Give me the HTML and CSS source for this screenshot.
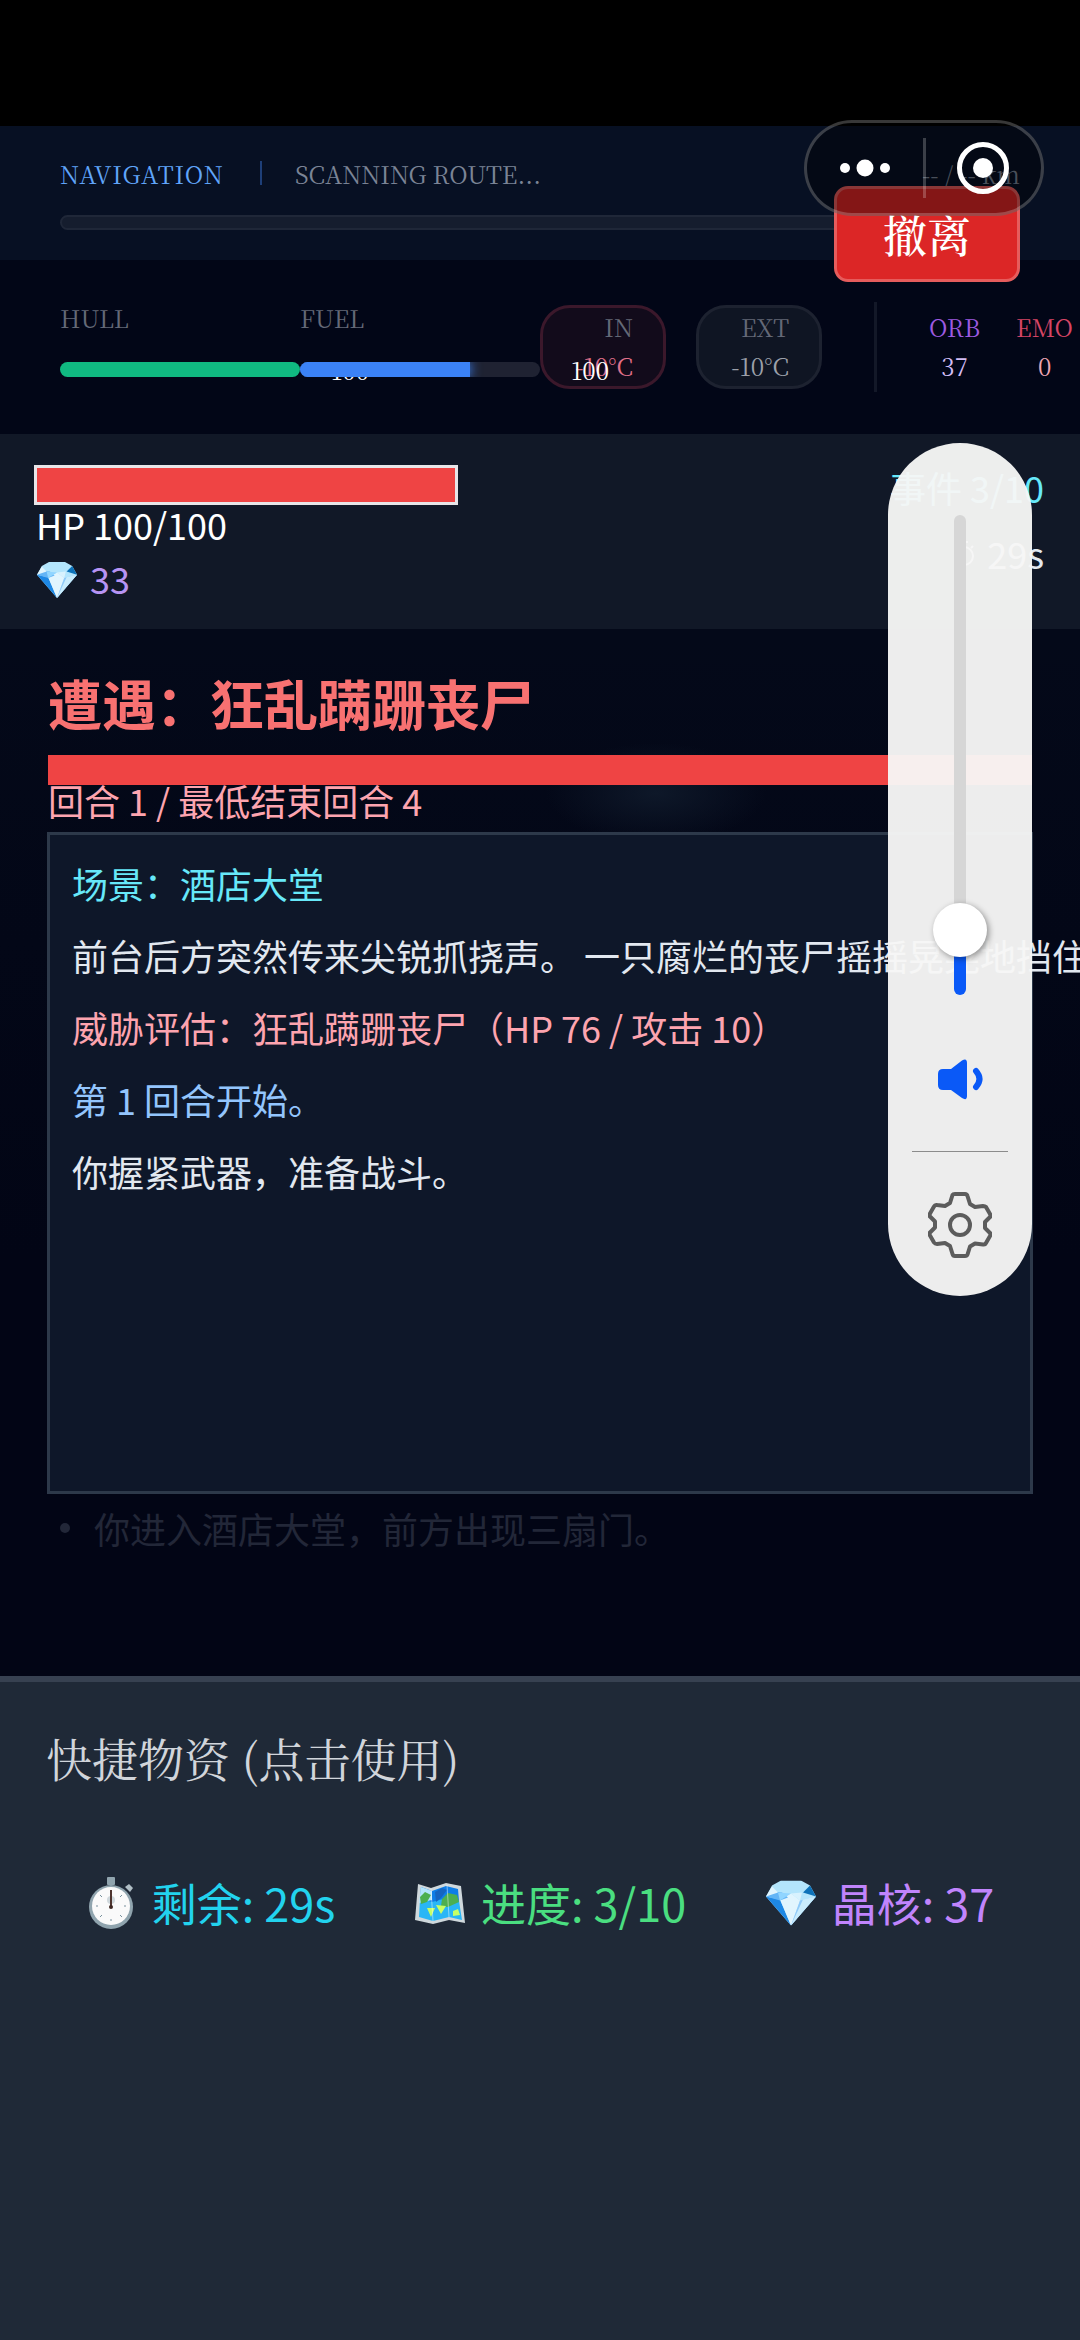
FILE: index.html
```html
<!DOCTYPE html>
<html lang="zh-CN">
<head>
<meta charset="utf-8">
<meta name="viewport" content="width=device-width, initial-scale=1">
<title>遭遇：狂乱蹒跚丧尸</title>
<link rel="stylesheet" href="styles.css">
</head>
<body>
<svg class="defs" aria-hidden="true">
  <symbol id="gem" viewBox="0 0 50 45">
    <path fill="#b3e5fc" d="M15 0h20l9 5 6 11-25 29L0 16 6 5z"/>
    <path fill="#1e88e5" d="M0 16l14 3 11 26z"/>
    <path fill="#e1f5fe" d="M14 19l11-6 9 7-9 25z"/>
    <path fill="#90caf9" d="M34 20l16-4-25 29z"/>
    <path fill="#c9ecfd" d="M37 19l13-3-25 29z"/>
    <path fill="#64b5f6" d="M6 11l10 1 6 5-8 3-14-4z"/>
    <path fill="#90d5ff" d="M12 12l13 1-11 7z"/>
    <path fill="#e1f5fe" d="M0 16l6-10 6 6z"/>
    <path fill="#0d72b9" d="M44 5l6 11-13-4z"/>
    <path fill="#d8f2fe" d="M25 13l11-1-2 8z"/>
  </symbol>
</svg>
<div class="screen">
  <header class="nav">
    <div class="nav-line">
      <span class="nav-title">NAVIGATION</span>
      <span class="nav-sep"></span>
      <span class="nav-route">SCANNING ROUTE...</span>
      <span class="nav-km">-- / -- km</span>
    </div>
    <div class="nav-track"></div>
    <button class="evac" type="button">撤离</button>
  </header>

  <section class="status">
    <div class="meter">
      <span class="label">HULL</span>
      <div class="bar"><div class="fill hull"></div></div>
      <span class="value">100</span>
    </div>
    <div class="meter">
      <span class="label">FUEL</span>
      <div class="bar"><div class="fill fuel" style="width:71%"></div></div>
      <span class="value">100</span>
    </div>
    <div class="temp inside"><span class="label">IN</span><span>-10°C</span></div>
    <div class="temp"><span class="label">EXT</span><span>-10°C</span></div>
    <div class="stats">
      <div class="stat orb"><span class="name">ORB</span><span>37</span></div>
      <div class="stat emo"><span class="name">EMO</span><span>0</span></div>
    </div>
  </section>

  <section class="player">
    <div class="vitals">
      <div class="hp-bar"></div>
      <span>HP 100/100</span>
      <span class="gems"><svg class="gem-small"><use href="#gem"/></svg>33</span>
    </div>
    <div class="progress">
      <span class="event">事件 3/10</span>
      <span class="timer"><svg class="watch" viewBox="0 0 22 28" fill="none" stroke="currentColor" stroke-width="2"><circle cx="11" cy="17" r="9"/><path d="M11 17V10M11 8V4M7 3h8M18 9l2-2"/></svg>29s</span>
    </div>
  </section>

  <main class="battle">
    <h1>遭遇：狂乱蹒跚丧尸</h1>
    <div class="enemy-bar"></div>
    <p class="round">回合 1 / 最低结束回合 4</p>
    <div class="log">
      <p class="scene">场景：酒店大堂</p>
      <p>前台后方突然传来尖锐抓挠声。 一只腐烂的丧尸摇摇晃晃地挡住</p>
      <p class="threat">威胁评估：狂乱蹒跚丧尸（HP 76 / 攻击 10）</p>
      <p class="turn">第 1 回合开始。</p>
      <p>你握紧武器，准备战斗。</p>
    </div>
    <ul class="history"><li>你进入酒店大堂，前方出现三扇门。</li></ul>
  </main>

  <footer class="supplies">
    <h2>快捷物资 (点击使用)</h2>
    <div class="summary">
      <span class="item time">
        <svg viewBox="0 0 50 52"><rect x="21" y="0" width="8" height="8" rx="1" fill="#90a4ae"/><path d="M39 10l4-3 4 4-3 4z" fill="#b0bec5"/><circle cx="25" cy="30" r="22" fill="#90a4ae"/><circle cx="25" cy="29" r="19" fill="#fafafa"/><path d="M25 14v2M25 42v2M10 29h2M38 29h2M14 18l2 2M34 38l2 2M36 18l-2 2M16 38l-2 2" stroke="#78909c" stroke-width="1"/><circle cx="25" cy="23" r="4" fill="#cfd8dc"/><path d="M25 13v17" stroke="#4e342e" stroke-width="2"/><circle cx="25" cy="30" r="2" fill="#3e2723"/></svg>
        剩余: 29s</span>
      <span class="item route">
        <svg viewBox="0 0 50 52"><path fill="#cfd8dc" d="M3 7l13 4 15-5 15 3 4 37-16-3-16 4-18-4z"/><path fill="#0d7ee8" d="M6 10l11 4 14-5 12 3 1 12-12-2-15 4L5 22z"/><path fill="#29b6f6" d="M5 22l12 3 15-4 12 3 3 19-13-3-16 4-14-4z"/><path fill="#b3e5fc" d="M6 10l11 4v9L4 26z"/><path fill="#4caf50" d="M5 20l5-5 6 3-4 7-6 2zM27 22l6-6 9 2 2 7-11 5-7-1z"/><path fill="#1565c0" d="M20 15l7-4 5 2-6 8-5 4z"/><path fill="#c6ff66" d="M12 31h8l-4 9zM21 28l10 1-5 8zM38 34l5-2 2 6-7 1z"/><path stroke="#fff" stroke-opacity=".45" d="M16 12l2 32M32 8l2 32" fill="none"/></svg>
        进度: 3/10</span>
      <span class="item core">
        <svg viewBox="0 0 50 45"><use href="#gem"/></svg>
        晶核: 37</span>
    </div>
  </footer>

  <div class="capsule">
    <button type="button" aria-label="更多"><svg width="50" height="20" viewBox="0 0 50 20" fill="#fff"><circle cx="5" cy="10" r="5"/><circle cx="25" cy="10" r="8.500"/><circle cx="45" cy="10" r="5"/></svg></button>
    <i class="capsule-sep"></i>
    <button type="button" aria-label="关闭"><svg width="52" height="52" viewBox="0 0 52 52"><circle cx="26" cy="26" r="23.500" fill="none" stroke="#fff" stroke-width="5"/><circle cx="26" cy="26" r="10" fill="#fff"/></svg></button>
  </div>

  <aside class="volume">
    <input type="range" min="0" max="100" value="9" aria-label="音量">
    <svg class="speaker" width="48" height="48" viewBox="0 0 48 48"><path d="M7 14h8L26 5.500Q31 2.500 31 8v33q0 5-5 2L15 35H7q-5 0-5-5V19q0-5 5-5z" fill="#0a59f7"/><path d="M40 16q7 8 0 16" fill="none" stroke="#0a59f7" stroke-width="6" stroke-linecap="round"/></svg>
    <hr>
    <button type="button" aria-label="设置"><svg width="64" height="66" viewBox="0 0 64 66" fill="none" stroke="#5c5c5c" stroke-width="4" stroke-linejoin="round"><path d="M27 2h10q2 0 2.500 2l2.500 8 5 3 8-1q2 0 3 1l4 7q1 2 0 3l-5 5v6l5 5q1 1 0 3l-4 7q-1 2-3 1.500l-8-1-5 3-2.500 8Q39 64 37 64H27q-2 0-2.500-2L22 54l-5-3-8 1q-2 0-3-1.500l-4-7q-1-2 0-3l5-5v-6l-5-5q-1-1 0-3l4-7q1-2 3-1.500l8 1 5-3 2.500-8Q25 2 27 2z"/><circle cx="32" cy="33" r="10"/></svg></button>
  </aside>
</div>
</body>
</html>
```
FILE: styles.css
```css
* { box-sizing: border-box; }

body {
  margin: 0;
  background: #000;
  color: #e2e8f0;
  font-family: "Noto Sans CJK SC", sans-serif;
  font-size: 36px;
  line-height: 48px;
}

h1, h2, p, ul { margin: 0; padding: 0; }
button { border: 0; padding: 0; background: none; display: flex; align-items: center; justify-content: center; }
svg { display: block; }
.defs { position: absolute; width: 0; height: 0; }

.screen {
  position: relative;
  display: flex;
  flex-direction: column;
  min-height: 100vh;
  padding-top: 126px;
  overflow: hidden;
}

/* Navigation strip */
.nav, .status {
  font-family: "Noto Serif CJK SC", "Liberation Serif", serif;
  font-size: 24px;
  line-height: 36px;
}
.nav {
  position: relative;
  padding: 30px 60px 30px;
  background: #071023;
}
.nav-line { display: flex; align-items: center; height: 36px; margin-bottom: 23px; }
.nav-title { color: #60a5fa; letter-spacing: 1px; }
.nav-sep { width: 2px; height: 24px; margin: -2px 33px 0 36px; background: #1e3f78; }
.nav-route { color: #7b8496; }
.nav-km { margin-left: auto; color: #7b8496; }
.nav-track { height: 15px; border: 2px solid #1f2738; border-radius: 8px; background: #151d2e; }
.evac {
  position: absolute;
  right: 60px;
  top: 60px;
  width: 186px;
  height: 96px;
  border: 3px solid #e65c5c;
  border-radius: 14px;
  background: #dc2626;
  color: #fff;
  font-family: "Noto Serif CJK SC", "Noto Sans CJK SC", serif;
  font-size: 44px;
  font-weight: 500;
}

/* Ship status */
.status {
  display: flex;
  align-items: center;
  height: 174px;
  padding: 0 0 0 60px;
  background: #020617;
}
.label { color: #646977; }
.meter { position: relative; flex: none; width: 240px; height: 94px; }
.meter .label { display: block; margin-bottom: 26px; }
.bar { position: relative; height: 15px; border-radius: 8px; background: #1f2232; overflow: hidden; }
.fill { height: 15px; }
.hull { background: #10b981; }
.fuel { background: #3b82f6; box-shadow: 0 0 12px #3b82f6; }
.value { position: absolute; left: 271px; top: 52px; color: #fff; }
.temp {
  display: flex;
  flex: none;
  flex-direction: column;
  justify-content: center;
  align-items: flex-end;
  width: 126px;
  height: 84px;
  margin-right: 30px;
  padding: 0 30px 2px 0;
  border: 3px solid #1d2230;
  border-radius: 30px;
  background: #0f1523;
  color: #9ca0aa;
  line-height: 39px;
}
.inside { border-color: #3b182b; background: #120b1b; color: #e0708a; }
.stats {
  display: flex;
  gap: 36px;
  flex: none;
  height: 90px;
  margin-left: 22px;
  padding: 0 0 2px 52px;
  border-left: 3px solid #131828;
  align-items: center;
  line-height: 39px;
}
.stat { display: flex; flex-direction: column; align-items: center; }
.orb { color: #d3bdf5; }
.orb .name { color: #9d5ae0; }
.emo { color: #eda5b4; }
.emo .name { color: #d64565; }

/* Player summary */
.player {
  display: flex;
  justify-content: space-between;
  height: 195px;
  padding: 31px 36px 0;
  background: #111827;
}
.vitals { display: flex; flex-direction: column; width: 422px; color: #fff; }
.hp-bar { flex: none; height: 40px; margin: 0 0 -5px -2px; border: 3px solid #e8e5e8; background: #ef4444; }
.gems { display: flex; align-items: center; gap: 12px; margin-top: 6px; color: #b794f4; }
.gem-small { width: 42px; height: 36px; margin-top: 4px; }
.progress { display: flex; flex-direction: column; align-items: flex-end; gap: 18px; margin-top: -2px; }
.event { color: #67e8f9; }
.timer { display: flex; align-items: center; gap: 12px; }
.watch { width: 22px; height: 28px; }

/* Battle */
.battle {
  height: 1047px;
  padding: 38px 48px 0;
  background:
    radial-gradient(ellipse 110px 50px at 656px 164px, #0e1829, transparent),
    linear-gradient(#02051600, #020515 60%),
    #040919;
  white-space: nowrap;
}
h1 { color: #f87171; font-size: 54px; line-height: 72px; font-weight: 700; }
.enemy-bar { height: 30px; margin-top: 16px; background: #ef4444; }
.round { height: 48px; margin-top: -9px; color: #fda4af; }
.log {
  height: 662px;
  margin: 8px -1px 0;
  padding: 24px 22px;
  border: 3px solid #2d394a;
  background: #0e1729;
}
.log p { margin-bottom: 24px; }
.log .scene { color: #67e8f9; }
.log .threat { color: #fda4af; }
.log .turn { color: #93c5fd; }
.history { display: flex; padding: 10px 0 0 12px; color: #222738; list-style: none; }
.history li { display: flex; gap: 24px; align-items: center; }
.history li::before { content: ""; width: 10px; height: 10px; border-radius: 50%; background: currentColor; }

/* Supplies */
.supplies { flex: 1; border-top: 6px solid #374151; padding: 43px 46px; background: #1f2937; }
h2 {
  color: #d1d5db;
  font-family: "Noto Serif CJK SC", "Liberation Serif", serif;
  font-size: 46px;
  line-height: 64px;
  font-weight: 400;
}
.summary { display: flex; justify-content: space-around; margin-top: 82px; font-size: 45px; line-height: 64px; }
.item { display: flex; align-items: center; gap: 16px; }
.item svg { width: 50px; height: 52px; }
.time { color: #22d3ee; }
.route { color: #4ade80; }
.core { color: #c084fc; }

/* Host app capsule */
.capsule {
  position: absolute;
  right: 36px;
  top: 120px;
  display: flex;
  align-items: center;
  width: 240px;
  height: 96px;
  border: 3px solid #ffffff38;
  border-radius: 48px;
  background: #00000066;
}
.capsule button { flex: 1; height: 90px; }
.capsule-sep { width: 3px; height: 60px; background: #ffffff38; }

/* System volume panel */
.volume {
  position: absolute;
  right: 48px;
  top: 443px;
  display: flex;
  flex-direction: column;
  align-items: center;
  width: 144px;
  height: 853px;
  padding-top: 72px;
  border-radius: 72px;
  background: rgba(247, 247, 246, .96);
}
.volume input {
  appearance: none;
  writing-mode: vertical-lr;
  direction: rtl;
  width: 54px;
  height: 480px;
  margin: 0;
  background: none;
}
.volume input::-webkit-slider-runnable-track {
  width: 12px;
  height: 480px;
  border-radius: 6px;
  background: linear-gradient(#d6d6d6 86%, #0a59f7 86%);
}
.volume input::-webkit-slider-thumb {
  appearance: none;
  width: 54px;
  height: 54px;
  margin-left: -21px;
  border-radius: 50%;
  background: #fff;
  box-shadow: 2px 2px 6px #00000066;
}
.speaker { margin-top: 60px; }
.volume hr { width: 96px; height: 1px; margin: 48px 0 40px; border: 0; background: #8c8c8c; }
```
